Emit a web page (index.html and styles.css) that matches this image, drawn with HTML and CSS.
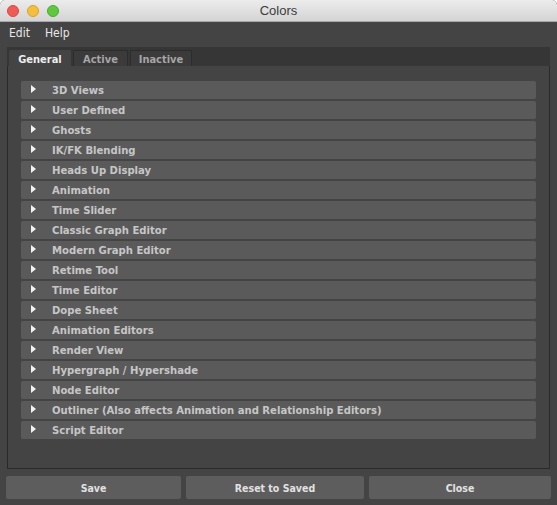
FILE: index.html
```html
<!DOCTYPE html>
<html>
<head>
<meta charset="utf-8">
<link rel="stylesheet" href="styles.css">
</head>
<body>
<div class="window">
  <div class="titlebar">
    <div class="lights">
      <span class="light red"></span>
      <span class="light yellow"></span>
      <span class="light green"></span>
    </div>
    <div class="title">Colors</div>
  </div>
  <div class="menubar">
    <span class="menu">Edit</span>
    <span class="menu">Help</span>
  </div>
  <div class="tabs">
    <div class="tab active-tab">General</div>
    <div class="tab">Active</div>
    <div class="tab">Inactive</div>
  </div>
  <div class="panel">
    <div class="row"><span class="tri"></span><span class="label">3D Views</span></div>
    <div class="row"><span class="tri"></span><span class="label">User Defined</span></div>
    <div class="row"><span class="tri"></span><span class="label">Ghosts</span></div>
    <div class="row"><span class="tri"></span><span class="label">IK/FK Blending</span></div>
    <div class="row"><span class="tri"></span><span class="label">Heads Up Display</span></div>
    <div class="row"><span class="tri"></span><span class="label">Animation</span></div>
    <div class="row"><span class="tri"></span><span class="label">Time Slider</span></div>
    <div class="row"><span class="tri"></span><span class="label">Classic Graph Editor</span></div>
    <div class="row"><span class="tri"></span><span class="label">Modern Graph Editor</span></div>
    <div class="row"><span class="tri"></span><span class="label">Retime Tool</span></div>
    <div class="row"><span class="tri"></span><span class="label">Time Editor</span></div>
    <div class="row"><span class="tri"></span><span class="label">Dope Sheet</span></div>
    <div class="row"><span class="tri"></span><span class="label">Animation Editors</span></div>
    <div class="row"><span class="tri"></span><span class="label">Render View</span></div>
    <div class="row"><span class="tri"></span><span class="label">Hypergraph / Hypershade</span></div>
    <div class="row"><span class="tri"></span><span class="label">Node Editor</span></div>
    <div class="row"><span class="tri"></span><span class="label">Outliner (Also affects Animation and Relationship Editors)</span></div>
    <div class="row"><span class="tri"></span><span class="label">Script Editor</span></div>
  </div>
  <div class="buttons">
    <div class="btn btn-save">Save</div>
    <div class="btn btn-reset">Reset to Saved</div>
    <div class="btn btn-close">Close</div>
  </div>
</div>
</body>
</html>
```

FILE: styles.css
```css
* { box-sizing: border-box; }
html, body { margin: 0; padding: 0; background: #ffffff; }
body { width: 557px; height: 505px; overflow: hidden; font-family: "DejaVu Sans Condensed", "DejaVu Sans", "Liberation Sans", sans-serif; }

.window {
  width: 557px;
  height: 505px;
  background: #444444;
  border-radius: 5px 5px 0 0;
  overflow: hidden;
  display: flex;
  flex-direction: column;
}

.titlebar {
  height: 22px;
  background: linear-gradient(#ececec, #d4d4d4);
  border-bottom: 1px solid #a9a9a9;
  display: flex;
  align-items: center;
  position: relative;
}
.lights { display: flex; gap: 8px; padding-left: 7px; }
.light { width: 12px; height: 12px; border-radius: 50%; display: block; }
.red { background: #ee5c55; border: 1px solid #d44a43; }
.yellow { background: #f5be3c; border: 1px solid #d9a02c; }
.green { background: #5fc83f; border: 1px solid #48ad2c; }
.title {
  position: absolute;
  left: 0; right: 0; top: 0; bottom: 0;
  text-align: center;
  line-height: 21px;
  font-family: "Liberation Sans", sans-serif;
  font-size: 13px;
  color: #3b3b3b;
}

.menubar {
  height: 25px;
  display: flex;
  align-items: center;
  gap: 15px;
  padding-left: 9px;
  padding-bottom: 3px;
}
.menu { font-size: 12px; color: #e8e8e8; font-weight: normal; }

.tabs {
  margin: 0 7px;
  height: 19px;
  background: #363636;
  display: flex;
  align-items: flex-end;
  gap: 2px;
  padding-left: 2px;
}
.tab {
  height: 16px;
  background: #3b3b3b;
  border: 1px solid #2c2c2c;
  border-bottom: none;
  border-radius: 2px 2px 0 0;
  font-size: 11px;
  font-weight: bold;
  color: #a6a6a6;
  display: flex;
  align-items: center;
  justify-content: center;
  padding-top: 1px;
}
.tab:nth-child(1) { width: 62px; }
.tab:nth-child(2) { width: 55px; }
.tab:nth-child(3) { width: 62px; }
.tab.active-tab { background: #444444; border-color: #444444; color: #eeeeee; }

.panel {
  margin: 0 7px;
  height: 403px;
  background: #444444;
  border: 1px solid #2a2a2a;
  border-top: none;
  padding: 15px 13px 0 13px;
  display: flex;
  flex-direction: column;
  gap: 2px;
}
.row {
  height: 18px;
  background: #5a5a5a;
  border-radius: 2px;
  display: flex;
  align-items: center;
}
.tri {
  width: 0; height: 0;
  border-left: 5px solid #f2f2f2;
  border-top: 4.5px solid transparent;
  border-bottom: 4.5px solid transparent;
  margin-left: 10px;
  margin-top: -2px;
}
.label {
  margin-left: 16px;
  font-size: 11.2px;
  font-weight: bold;
  color: #c6c6c6;
  white-space: nowrap;
}

.buttons {
  display: flex;
  gap: 5px;
  padding: 7px 6px 0 6px;
}
.btn {
  height: 23px;
  background: #5d5d5d;
  border-radius: 2px;
  font-size: 10.5px;
  font-weight: bold;
  color: #e2e2e2;
  display: flex;
  align-items: center;
  justify-content: center;
}
.btn-save { width: 175px; }
.btn-reset { width: 178px; }
.btn-close { width: 182px; }
```
